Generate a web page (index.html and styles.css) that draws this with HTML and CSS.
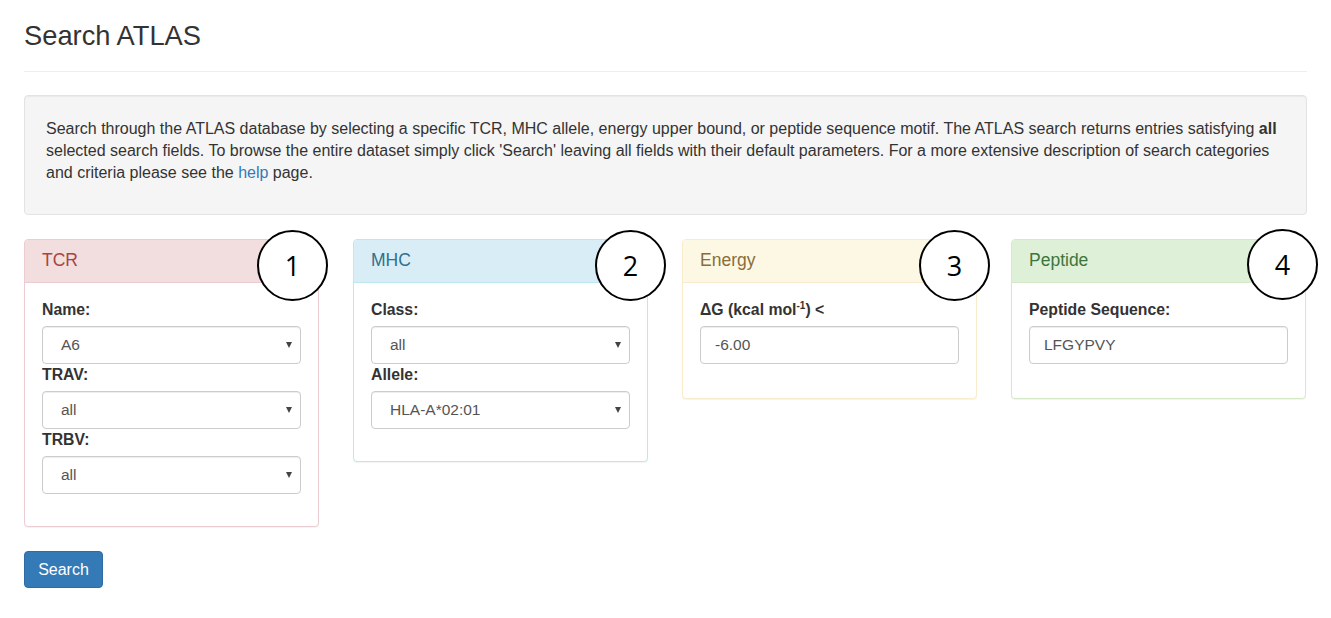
FILE: index.html
```html
<!DOCTYPE html>
<html>
<head>
<meta charset="utf-8">
<link rel="stylesheet" href="styles.css">
</head>
<body>
<div class="container">
  <h1 class="title">Search ATLAS</h1>
  <hr class="rule">
  <div class="well">
    <p>Search through the ATLAS database by selecting a specific TCR, MHC allele, energy upper bound, or peptide sequence motif. The ATLAS search returns entries satisfying <b>all</b> selected search fields. To browse the entire dataset simply click 'Search' leaving all fields with their default parameters. For a more extensive description of search categories and criteria please see the <a href="#">help</a> page.</p>
  </div>
  <div class="panels">
    <div class="panel panel-danger">
      <div class="panel-heading">TCR</div>
      <div class="panel-body">
        <label>Name:</label>
        <div class="select"><span>A6</span><i class="caret"></i></div>
        <label>TRAV:</label>
        <div class="select"><span>all</span><i class="caret"></i></div>
        <label>TRBV:</label>
        <div class="select"><span>all</span><i class="caret"></i></div>
      </div>
      <div class="badge b1">1</div>
    </div>
    <div class="panel panel-info">
      <div class="panel-heading">MHC</div>
      <div class="panel-body">
        <label>Class:</label>
        <div class="select"><span>all</span><i class="caret"></i></div>
        <label>Allele:</label>
        <div class="select"><span>HLA-A*02:01</span><i class="caret"></i></div>
      </div>
      <div class="badge b2">2</div>
    </div>
    <div class="panel panel-warning">
      <div class="panel-heading">Energy</div>
      <div class="panel-body">
        <label>ΔG (kcal mol<sup>-1</sup>) &lt;</label>
        <div class="input">-6.00</div>
      </div>
      <div class="badge b3">3</div>
    </div>
    <div class="panel panel-success">
      <div class="panel-heading">Peptide</div>
      <div class="panel-body">
        <label>Peptide Sequence:</label>
        <div class="input">LFGYPVY</div>
      </div>
      <div class="badge b4">4</div>
    </div>
  </div>
  <button class="btn">Search</button>
</div>
</body>
</html>
```
FILE: styles.css
```css
* { box-sizing: border-box; }
body {
  margin: 0;
  font-family: "Liberation Sans", Arial, sans-serif;
  color: #333;
  background: #fff;
}
.container {
  margin-left: 24px;
  width: 1283px;
}
.title {
  margin: 0;
  padding-top: 19px;
  font-size: 27.3px;
  font-weight: 400;
  line-height: 34px;
  color: #333;
}
.rule {
  margin: 18px 0 23px 0;
  border: 0;
  border-top: 1px solid #eee;
}
.well {
  background: #f5f5f5;
  border: 1px solid #e3e3e3;
  border-radius: 4px;
  box-shadow: inset 0 1px 1px rgba(0,0,0,.05);
  padding: 22px 21px 30px 21px;
  min-height: 120px;
}
.well p {
  margin: 0;
  font-size: 16px;
  line-height: 22px;
}
.well a { color: #337ab7; text-decoration: none; }
.panels {
  display: flex;
  gap: 34px;
  align-items: flex-start;
  margin-top: 24px;
}
.panel {
  position: relative;
  flex: 0 0 295px;
  border: 1px solid #ddd;
  border-radius: 4px;
  background: #fff;
  box-shadow: 0 1px 1px rgba(0,0,0,.05);
}
.panel-heading {
  height: 43px;
  padding: 9px 17px 10px 17px;
  font-size: 17.5px;
  line-height: 22px;
  border-bottom: 1px solid transparent;
  border-radius: 3px 3px 0 0;
}
.panel-body {
  padding: 17px 17px 31px 17px;
}
.panel-danger { border-color: #ebccd1; }
.panel-danger .panel-heading { background: #f2dede; color: #a94442; border-color: #ebccd1; }
.panel-info { border-color: #bce8f1; }
.panel-info .panel-heading { background: #d9edf7; color: #31708f; border-color: #bce8f1; }
.panel-warning { border-color: #faebcc; }
.panel-warning .panel-heading { background: #fcf8e3; color: #8a6d3b; border-color: #faebcc; }
.panel-success { border-color: #d6e9c6; }
.panel-success .panel-heading { background: #dff0d8; color: #3c763d; border-color: #d6e9c6; }
label {
  display: block;
  font-weight: 700;
  font-size: 15.8px;
  line-height: 20px;
  margin-bottom: 6px;
  color: #333;
}
label sup { font-size: 10px; line-height: 0; }
.select, .input {
  height: 38px;
  width: 259px;
  border: 1px solid #ccc;
  border-radius: 4px;
  box-shadow: inset 0 1px 1px rgba(0,0,0,.075);
  font-size: 15.5px;
  color: #555;
  display: flex;
  align-items: center;
  background: #fff;
}
.select { padding: 0 8px 0 18px; justify-content: space-between; margin-bottom: 1px; }
.input { padding: 0 14px; margin-bottom: 3px; }
.caret {
  width: 0; height: 0;
  border-left: 3.5px solid transparent;
  border-right: 3.5px solid transparent;
  border-top: 6px solid #444;
}
.badge {
  position: absolute;
  width: 71px;
  height: 71px;
  border: 2px solid #000;
  border-radius: 50%;
  background: #fff;
  display: flex;
  align-items: center;
  justify-content: center;
  font-family: "Open Sans", "Liberation Sans", sans-serif;
  font-size: 27px;
  color: #000;
}
.b1 { top: -10px; right: -10px; }
.b2 { top: -10px; right: -19px; }
.b3 { top: -10px; right: -14px; }
.b4 { top: -11px; right: -13px; }
.btn {
  margin-top: 24px;
  width: 79px;
  height: 37px;
  background: #337ab7;
  border: 1px solid #2e6da4;
  border-radius: 4px;
  color: #fff;
  font-family: "Liberation Sans", Arial, sans-serif;
  font-size: 16px;
  padding: 0;
}
```
